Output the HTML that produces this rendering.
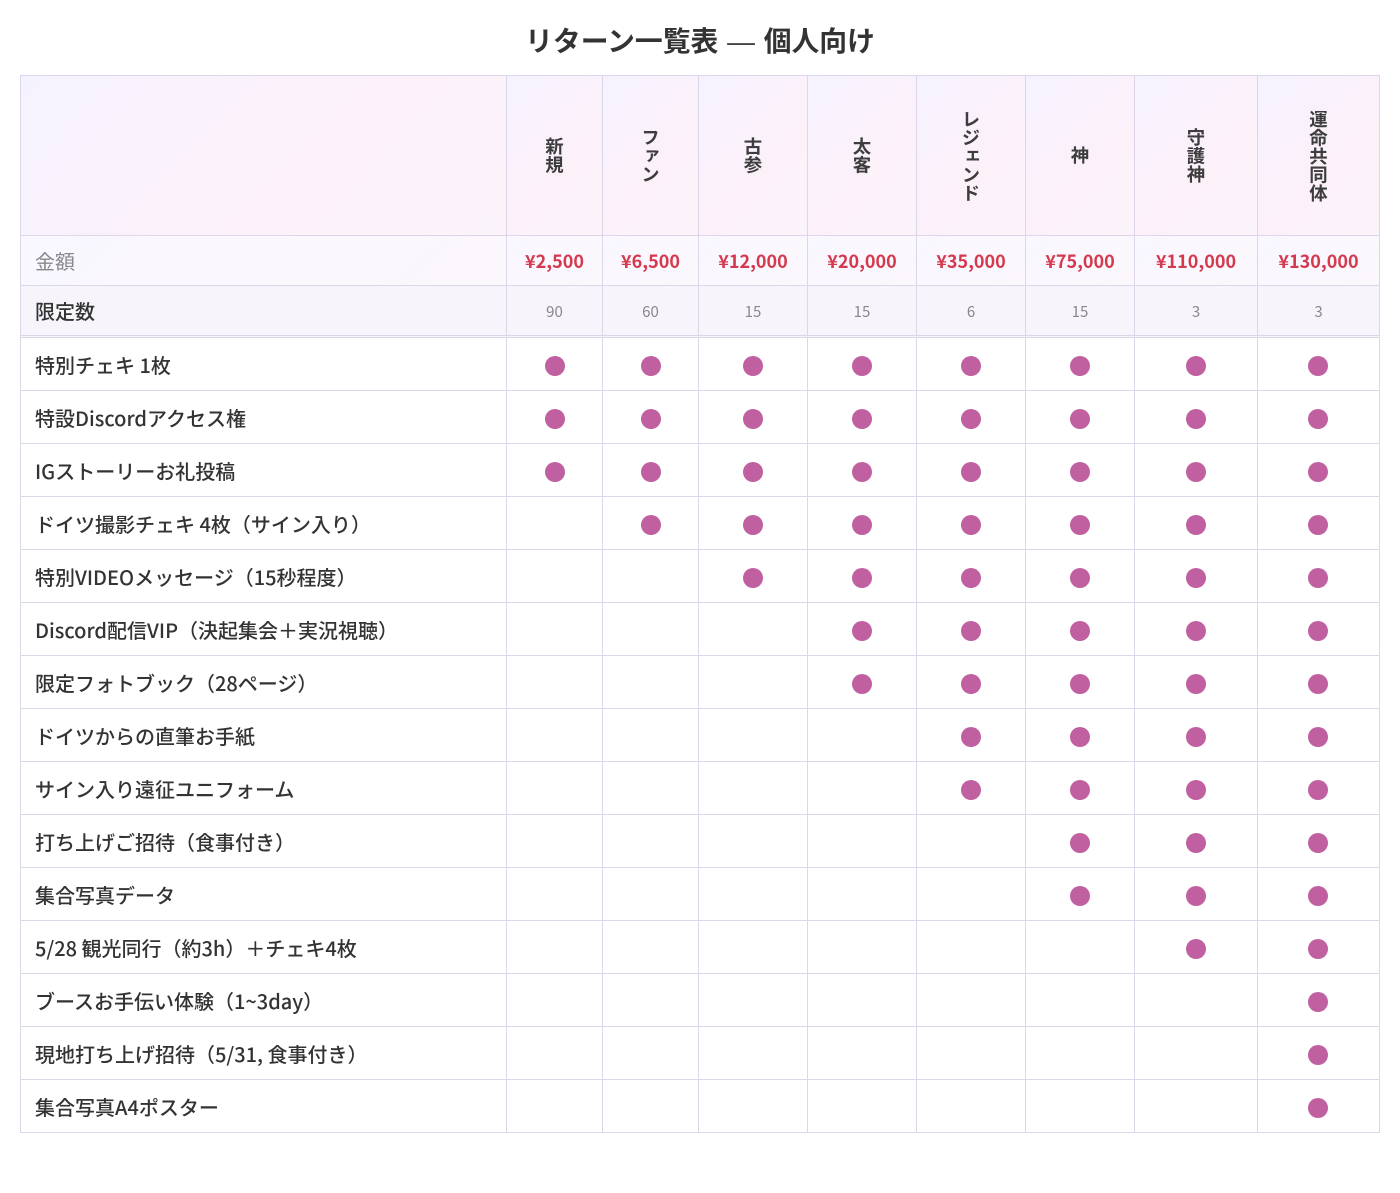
<!DOCTYPE html>
<html lang="ja">
<head>
<meta charset="utf-8">
<style>
*{box-sizing:border-box}
html,body{margin:0;padding:0;background:#fff;width:1400px;height:1193px;overflow:hidden}
body{font-family:"Noto Sans CJK JP","Liberation Sans",sans-serif;color:#333}
h1{position:absolute;left:0;top:19px;width:1400px;margin:0;text-align:center;font-size:27.8px;line-height:42px;font-weight:700;color:#333}
h1 b{font-family:"Liberation Sans",sans-serif;font-weight:400;color:#444;margin:0 2.5px}
table{position:absolute;left:20px;top:75px;width:1360px;table-layout:fixed;border-collapse:separate;border-spacing:0;border-top:1px solid #ddd6e8;border-left:1px solid #ddd6e8}
th,td{border-right:1px solid #ddd6e8;border-bottom:1px solid #ddd6e8;padding:0;text-align:center;vertical-align:middle}
.h th{height:160px;background:linear-gradient(135deg,#f5f2ff,#fcf1f9 60%,#fbf3fa);font-size:18.4px;font-weight:700;color:#3d3d3d;line-height:0}
.h span{writing-mode:vertical-rl;display:inline-block;line-height:18px;vertical-align:top}
.l{text-align:left;padding-left:14px;font-size:20px;font-weight:500;color:#333}
.p td{height:50px;background:linear-gradient(135deg,#f9f7ff,#fbf7fc);font-size:18px;font-weight:700;color:#d4394e}
.p .l{font-weight:400;font-size:20px;color:#888}
.n td{height:52px;background:#f7f5fb;font-size:15px;color:#888;border-bottom:3px double #ddd6e8;padding-top:1px}
.n .l{font-size:20px;font-weight:500;color:#333;padding-top:0}
.r td{height:53px;background:#fff}
.r i{display:block;position:relative;top:2px;width:20px;height:20px;border-radius:50%;background:#c060a0;margin:0 auto}
.r td:last-child i{left:-.5px}
</style>
</head>
<body>
<h1>リターン一覧表 <b>—</b> 個人向け</h1>
<table>
<colgroup><col style="width:486px"><col style="width:96px"><col style="width:96px"><col style="width:109px"><col style="width:109px"><col style="width:109px"><col style="width:109px"><col style="width:123px"><col style="width:122px"></colgroup>
<tr class="h"><th></th><th><span>新規</span></th><th><span>ファン</span></th><th><span>古参</span></th><th><span>太客</span></th><th><span>レジェンド</span></th><th><span>神</span></th><th><span>守護神</span></th><th><span>運命共同体</span></th></tr>
<tr class="p"><td class="l">金額</td><td>¥2,500</td><td>¥6,500</td><td>¥12,000</td><td>¥20,000</td><td>¥35,000</td><td>¥75,000</td><td>¥110,000</td><td>¥130,000</td></tr>
<tr class="n"><td class="l">限定数</td><td>90</td><td>60</td><td>15</td><td>15</td><td>6</td><td>15</td><td>3</td><td>3</td></tr>
<tr class="r"><td class="l">特別チェキ 1枚</td><td><i></i></td><td><i></i></td><td><i></i></td><td><i></i></td><td><i></i></td><td><i></i></td><td><i></i></td><td><i></i></td></tr>
<tr class="r"><td class="l">特設Discordアクセス権</td><td><i></i></td><td><i></i></td><td><i></i></td><td><i></i></td><td><i></i></td><td><i></i></td><td><i></i></td><td><i></i></td></tr>
<tr class="r"><td class="l">IGストーリーお礼投稿</td><td><i></i></td><td><i></i></td><td><i></i></td><td><i></i></td><td><i></i></td><td><i></i></td><td><i></i></td><td><i></i></td></tr>
<tr class="r"><td class="l">ドイツ撮影チェキ 4枚（サイン入り）</td><td></td><td><i></i></td><td><i></i></td><td><i></i></td><td><i></i></td><td><i></i></td><td><i></i></td><td><i></i></td></tr>
<tr class="r"><td class="l">特別VIDEOメッセージ（15秒程度）</td><td></td><td></td><td><i></i></td><td><i></i></td><td><i></i></td><td><i></i></td><td><i></i></td><td><i></i></td></tr>
<tr class="r"><td class="l">Discord配信VIP（決起集会＋実況視聴）</td><td></td><td></td><td></td><td><i></i></td><td><i></i></td><td><i></i></td><td><i></i></td><td><i></i></td></tr>
<tr class="r"><td class="l">限定フォトブック（28ページ）</td><td></td><td></td><td></td><td><i></i></td><td><i></i></td><td><i></i></td><td><i></i></td><td><i></i></td></tr>
<tr class="r"><td class="l">ドイツからの直筆お手紙</td><td></td><td></td><td></td><td></td><td><i></i></td><td><i></i></td><td><i></i></td><td><i></i></td></tr>
<tr class="r"><td class="l">サイン入り遠征ユニフォーム</td><td></td><td></td><td></td><td></td><td><i></i></td><td><i></i></td><td><i></i></td><td><i></i></td></tr>
<tr class="r"><td class="l">打ち上げご招待（食事付き）</td><td></td><td></td><td></td><td></td><td></td><td><i></i></td><td><i></i></td><td><i></i></td></tr>
<tr class="r"><td class="l">集合写真データ</td><td></td><td></td><td></td><td></td><td></td><td><i></i></td><td><i></i></td><td><i></i></td></tr>
<tr class="r"><td class="l">5/28 観光同行（約3h）＋チェキ4枚</td><td></td><td></td><td></td><td></td><td></td><td></td><td><i></i></td><td><i></i></td></tr>
<tr class="r"><td class="l">ブースお手伝い体験（1~3day）</td><td></td><td></td><td></td><td></td><td></td><td></td><td></td><td><i></i></td></tr>
<tr class="r"><td class="l">現地打ち上げ招待（5/31, 食事付き）</td><td></td><td></td><td></td><td></td><td></td><td></td><td></td><td><i></i></td></tr>
<tr class="r"><td class="l">集合写真A4ポスター</td><td></td><td></td><td></td><td></td><td></td><td></td><td></td><td><i></i></td></tr>
</table>
</body>
</html>
